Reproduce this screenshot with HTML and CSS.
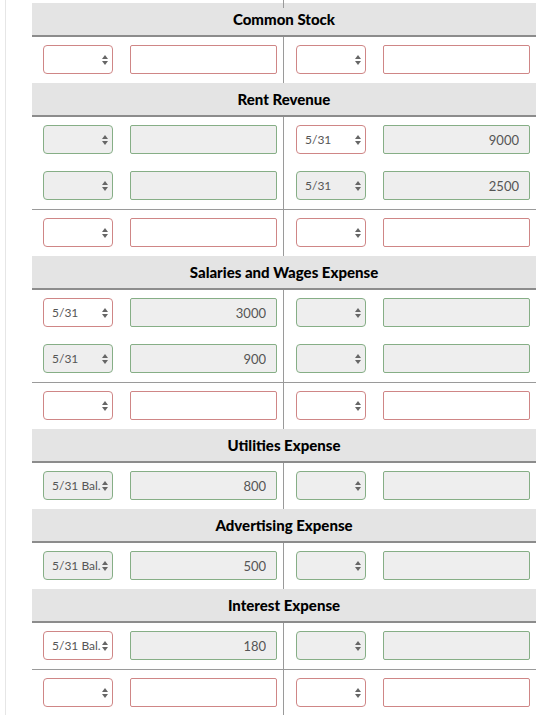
FILE: index.html
```html
<!DOCTYPE html>
<html lang="en">

<head>
    <meta charset="UTF-8">
    <meta name="viewport" content="width=device-width, initial-scale=1.0">
    <title>T-Accounts</title>
    <link rel="stylesheet" href="styles.css">
</head>

<body>

    <div class="page">
        <div class="ledger">

            <!-- tail of the account above -->
            <div class="entry entry-tail">
                <div class="side"></div>
                <div class="side"></div>
            </div>

            <!-- Common Stock -->
            <div class="account-title">Common Stock</div>
            <div class="entry">
                <div class="side">
                    <div class="pick"><select class="date wrong"><option></option><option>5/31</option><option>5/31 Bal.</option></select><svg class="arrows" viewBox="0 0 6 10"><path d="M0 4 L3 0 L6 4 Z M0 6 L6 6 L3 10 Z"/></svg></div>
                    <input class="amount wrong" type="text" value="">
                </div>
                <div class="side">
                    <div class="pick"><select class="date wrong"><option></option><option>5/31</option><option>5/31 Bal.</option></select><svg class="arrows" viewBox="0 0 6 10"><path d="M0 4 L3 0 L6 4 Z M0 6 L6 6 L3 10 Z"/></svg></div>
                    <input class="amount wrong" type="text" value="">
                </div>
            </div>

            <!-- Rent Revenue -->
            <div class="account-title">Rent Revenue</div>
            <div class="entry">
                <div class="side">
                    <div class="pick"><select class="date right"><option></option><option>5/31</option><option>5/31 Bal.</option></select><svg class="arrows" viewBox="0 0 6 10"><path d="M0 4 L3 0 L6 4 Z M0 6 L6 6 L3 10 Z"/></svg></div>
                    <input class="amount right" type="text" value="">
                </div>
                <div class="side">
                    <div class="pick"><select class="date wrong"><option></option><option selected>5/31</option><option>5/31 Bal.</option></select><svg class="arrows" viewBox="0 0 6 10"><path d="M0 4 L3 0 L6 4 Z M0 6 L6 6 L3 10 Z"/></svg></div>
                    <input class="amount right" type="text" value="9000">
                </div>
            </div>
            <div class="entry">
                <div class="side">
                    <div class="pick"><select class="date right"><option></option><option>5/31</option><option>5/31 Bal.</option></select><svg class="arrows" viewBox="0 0 6 10"><path d="M0 4 L3 0 L6 4 Z M0 6 L6 6 L3 10 Z"/></svg></div>
                    <input class="amount right" type="text" value="">
                </div>
                <div class="side">
                    <div class="pick"><select class="date right"><option></option><option selected>5/31</option><option>5/31 Bal.</option></select><svg class="arrows" viewBox="0 0 6 10"><path d="M0 4 L3 0 L6 4 Z M0 6 L6 6 L3 10 Z"/></svg></div>
                    <input class="amount right" type="text" value="2500">
                </div>
            </div>
            <div class="entry entry-total">
                <div class="side">
                    <div class="pick"><select class="date wrong"><option></option><option>5/31</option><option>5/31 Bal.</option></select><svg class="arrows" viewBox="0 0 6 10"><path d="M0 4 L3 0 L6 4 Z M0 6 L6 6 L3 10 Z"/></svg></div>
                    <input class="amount wrong" type="text" value="">
                </div>
                <div class="side">
                    <div class="pick"><select class="date wrong"><option></option><option>5/31</option><option>5/31 Bal.</option></select><svg class="arrows" viewBox="0 0 6 10"><path d="M0 4 L3 0 L6 4 Z M0 6 L6 6 L3 10 Z"/></svg></div>
                    <input class="amount wrong" type="text" value="">
                </div>
            </div>

            <!-- Salaries and Wages Expense -->
            <div class="account-title">Salaries and Wages Expense</div>
            <div class="entry">
                <div class="side">
                    <div class="pick"><select class="date wrong"><option></option><option selected>5/31</option><option>5/31 Bal.</option></select><svg class="arrows" viewBox="0 0 6 10"><path d="M0 4 L3 0 L6 4 Z M0 6 L6 6 L3 10 Z"/></svg></div>
                    <input class="amount right" type="text" value="3000">
                </div>
                <div class="side">
                    <div class="pick"><select class="date right"><option></option><option>5/31</option><option>5/31 Bal.</option></select><svg class="arrows" viewBox="0 0 6 10"><path d="M0 4 L3 0 L6 4 Z M0 6 L6 6 L3 10 Z"/></svg></div>
                    <input class="amount right" type="text" value="">
                </div>
            </div>
            <div class="entry">
                <div class="side">
                    <div class="pick"><select class="date right"><option></option><option selected>5/31</option><option>5/31 Bal.</option></select><svg class="arrows" viewBox="0 0 6 10"><path d="M0 4 L3 0 L6 4 Z M0 6 L6 6 L3 10 Z"/></svg></div>
                    <input class="amount right" type="text" value="900">
                </div>
                <div class="side">
                    <div class="pick"><select class="date right"><option></option><option>5/31</option><option>5/31 Bal.</option></select><svg class="arrows" viewBox="0 0 6 10"><path d="M0 4 L3 0 L6 4 Z M0 6 L6 6 L3 10 Z"/></svg></div>
                    <input class="amount right" type="text" value="">
                </div>
            </div>
            <div class="entry entry-total">
                <div class="side">
                    <div class="pick"><select class="date wrong"><option></option><option>5/31</option><option>5/31 Bal.</option></select><svg class="arrows" viewBox="0 0 6 10"><path d="M0 4 L3 0 L6 4 Z M0 6 L6 6 L3 10 Z"/></svg></div>
                    <input class="amount wrong" type="text" value="">
                </div>
                <div class="side">
                    <div class="pick"><select class="date wrong"><option></option><option>5/31</option><option>5/31 Bal.</option></select><svg class="arrows" viewBox="0 0 6 10"><path d="M0 4 L3 0 L6 4 Z M0 6 L6 6 L3 10 Z"/></svg></div>
                    <input class="amount wrong" type="text" value="">
                </div>
            </div>

            <!-- Utilities Expense -->
            <div class="account-title">Utilities Expense</div>
            <div class="entry">
                <div class="side">
                    <div class="pick"><select class="date right"><option></option><option>5/31</option><option selected>5/31 Bal.</option></select><svg class="arrows" viewBox="0 0 6 10"><path d="M0 4 L3 0 L6 4 Z M0 6 L6 6 L3 10 Z"/></svg></div>
                    <input class="amount right" type="text" value="800">
                </div>
                <div class="side">
                    <div class="pick"><select class="date right"><option></option><option>5/31</option><option>5/31 Bal.</option></select><svg class="arrows" viewBox="0 0 6 10"><path d="M0 4 L3 0 L6 4 Z M0 6 L6 6 L3 10 Z"/></svg></div>
                    <input class="amount right" type="text" value="">
                </div>
            </div>

            <!-- Advertising Expense -->
            <div class="account-title">Advertising Expense</div>
            <div class="entry">
                <div class="side">
                    <div class="pick"><select class="date right"><option></option><option>5/31</option><option selected>5/31 Bal.</option></select><svg class="arrows" viewBox="0 0 6 10"><path d="M0 4 L3 0 L6 4 Z M0 6 L6 6 L3 10 Z"/></svg></div>
                    <input class="amount right" type="text" value="500">
                </div>
                <div class="side">
                    <div class="pick"><select class="date right"><option></option><option>5/31</option><option>5/31 Bal.</option></select><svg class="arrows" viewBox="0 0 6 10"><path d="M0 4 L3 0 L6 4 Z M0 6 L6 6 L3 10 Z"/></svg></div>
                    <input class="amount right" type="text" value="">
                </div>
            </div>

            <!-- Interest Expense -->
            <div class="account-title">Interest Expense</div>
            <div class="entry">
                <div class="side">
                    <div class="pick"><select class="date wrong"><option></option><option>5/31</option><option selected>5/31 Bal.</option></select><svg class="arrows" viewBox="0 0 6 10"><path d="M0 4 L3 0 L6 4 Z M0 6 L6 6 L3 10 Z"/></svg></div>
                    <input class="amount right" type="text" value="180">
                </div>
                <div class="side">
                    <div class="pick"><select class="date right"><option></option><option>5/31</option><option>5/31 Bal.</option></select><svg class="arrows" viewBox="0 0 6 10"><path d="M0 4 L3 0 L6 4 Z M0 6 L6 6 L3 10 Z"/></svg></div>
                    <input class="amount right" type="text" value="">
                </div>
            </div>
            <div class="entry entry-total">
                <div class="side">
                    <div class="pick"><select class="date wrong"><option></option><option>5/31</option><option>5/31 Bal.</option></select><svg class="arrows" viewBox="0 0 6 10"><path d="M0 4 L3 0 L6 4 Z M0 6 L6 6 L3 10 Z"/></svg></div>
                    <input class="amount wrong" type="text" value="">
                </div>
                <div class="side">
                    <div class="pick"><select class="date wrong"><option></option><option>5/31</option><option>5/31 Bal.</option></select><svg class="arrows" viewBox="0 0 6 10"><path d="M0 4 L3 0 L6 4 Z M0 6 L6 6 L3 10 Z"/></svg></div>
                    <input class="amount wrong" type="text" value="">
                </div>
            </div>

        </div>
    </div>

</body>

</html>
```

FILE: styles.css
```css
body {
    font-family: Lato, "Liberation Sans", sans-serif;
    background-color: #fff;
    margin: 0;
    padding: 0;
}

.page {
    margin-left: 5px;
    border-left: 1px solid #e6e6e6;
    padding-left: 26px;
    min-height: 715px;
}

.ledger {
    width: 504px;
}

.account-title {
    height: 32px;
    line-height: 32px;
    background-color: #e4e4e4;
    border-bottom: 2px solid #8c8c8c;
    text-align: center;
    font-size: 15px;
    font-weight: 900;
    color: #000;
}

.entry {
    display: grid;
    grid-template-columns: 252px 252px;
    height: 46px;
}

.entry-tail {
    height: 3px;
}

.entry-total {
    border-top: 1px solid #9a9a9a;
}

.side {
    display: grid;
    grid-template-columns: 70px 147px;
    column-gap: 17px;
    align-items: start;
    padding: 8px 0 0 12px;
}

.side:first-child {
    border-right: 1px solid #9a9a9a;
    padding-left: 11px;
}

.pick {
    position: relative;
    height: 29px;
}

.date {
    appearance: none;
    -webkit-appearance: none;
    box-sizing: border-box;
    width: 70px;
    height: 29px;
    margin: 0;
    padding: 0 3px 0 8px;
    border-radius: 4px;
    font-family: inherit;
    font-size: 12px;
    color: #555;
    outline: none;
}

.arrows {
    position: absolute;
    right: 5px;
    top: 10px;
    width: 6px;
    height: 10px;
    fill: #666;
    pointer-events: none;
}

.amount {
    box-sizing: border-box;
    width: 147px;
    height: 29px;
    margin: 0;
    padding: 0 10px;
    border-radius: 2px;
    text-align: right;
    font-family: inherit;
    font-size: 13px;
    color: #555;
    outline: none;
}

.wrong {
    border: 1px solid #cf8686;
    background-color: #fff;
}

.right {
    border: 1px solid #86ae86;
    background-color: #eee;
}
```
